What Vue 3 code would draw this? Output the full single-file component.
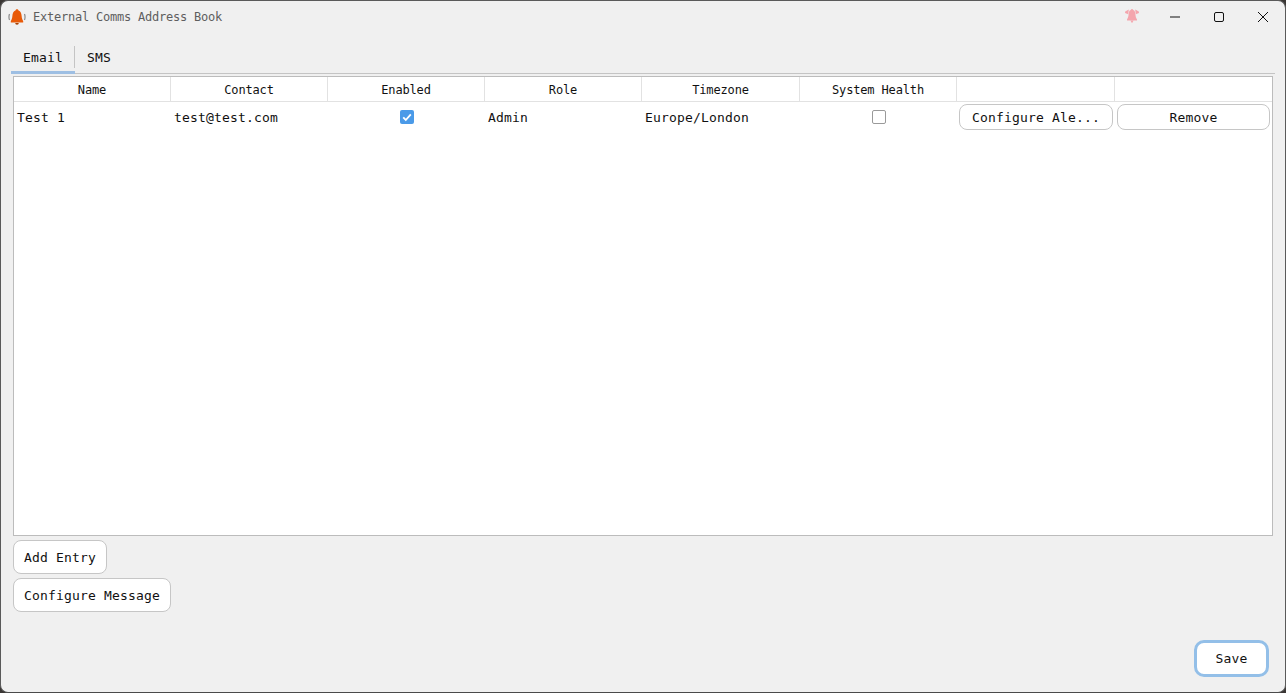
<template>
  <div class="window">
    <div class="titlebar">
      <svg class="app-icon" viewBox="0 0 18 18">
        <path d="M1.5 6 Q0.4 9 1.5 12 M16.5 6 Q17.6 9 16.5 12" fill="none" stroke="#8a8a8a" stroke-width="1.2" />
        <path d="M9 1.2c-.9 0-1.5.6-1.5 1.3C5.3 3.2 4.6 5.2 4.4 7.8c-.2 2.4-.7 3.8-1.6 5.2v1.4h12.4V13c-.9-1.4-1.4-2.8-1.6-5.2-.2-2.6-.9-4.6-3.1-5.3 0-.7-.6-1.3-1.5-1.3z" fill="#e85a08" />
        <path d="M7.2 15h3.6a1.8 1.8 0 0 1-3.6 0z" fill="#a84000" />
      </svg>
      <span class="title">External Comms Address Book</span>
      <div class="controls">
        <svg class="alert-icon" viewBox="0 0 16 16">
          <path d="M8 1c-.7 0-1.1.4-1.2 1C5.2 2.5 4.8 4 4.6 6.2 4.4 8.4 4 10 3 11.4v1.2h10v-1.2c-1-1.4-1.4-3-1.6-5.2C11.2 4 10.8 2.5 9.2 2 9.1 1.4 8.7 1 8 1z" fill="#f4a6ad" />
          <path d="M1.2 3.4 4.8 1.6 4.2 6.2 1 5zM14.8 3.4 11.2 1.6 11.8 6.2 15 5z" fill="#f4a6ad" />
          <path d="M6.4 12.6h3.2L8 15.2z" fill="#f4a6ad" />
        </svg>
        <button class="ctl">
          <svg viewBox="0 0 12 12"><path d="M1 6h10" stroke="#111" stroke-width="1" fill="none" /></svg>
        </button>
        <button class="ctl">
          <svg viewBox="0 0 12 12"><rect x="1.5" y="1.5" width="9" height="9" rx="1.5" stroke="#111" stroke-width="1" fill="none" /></svg>
        </button>
        <button class="ctl">
          <svg viewBox="0 0 12 12"><path d="M1 1l10 10M11 1L1 11" stroke="#111" stroke-width="1" fill="none" /></svg>
        </button>
      </div>
    </div>

    <div class="tabs">
      <div class="tab active">Email</div>
      <div class="tab">SMS</div>
    </div>

    <div class="table">
      <div class="thead">
        <div v-for="(h, i) in headers" :key="i" class="th">{{ h }}</div>
      </div>
      <div class="row">
        <div class="td">Test 1</div>
        <div class="td">test@test.com</div>
        <div class="td center"><span class="check on">
          <svg viewBox="0 0 14 14"><path d="M3.2 7.4l2.6 2.6 5-5.6" fill="none" stroke="#fff" stroke-width="1.8" /></svg>
        </span></div>
        <div class="td">Admin</div>
        <div class="td">Europe/London</div>
        <div class="td center"><span class="check"></span></div>
        <div class="td btn-cell"><button class="btn small">Configure Ale...</button></div>
        <div class="td btn-cell"><button class="btn small">Remove</button></div>
      </div>
    </div>

    <div class="actions">
      <button class="btn big">Add Entry</button>
      <button class="btn big">Configure Message</button>
    </div>

    <div class="footer">
      <button class="btn save">Save</button>
    </div>
  </div>
</template>

<script setup>
const headers = ['Name', 'Contact', 'Enabled', 'Role', 'Timezone', 'System Health', '', '']
</script>

<style>
html, body {
  margin: 0;
  height: 100%;
  background: #3a3634;
  overflow: hidden;
}
</style>

<style scoped>
.window {
  box-sizing: border-box;
  width: 1286px;
  height: 693px;
  display: flex;
  flex-direction: column;
  background: #f0f0f0;
  border: 1px solid #5a5a5a;
  border-bottom-color: #4a4a4a;
  border-radius: 8px;
  font-family: "DejaVu Sans Mono", "Liberation Mono", monospace;
  color: #111;
  overflow: hidden;
}

.titlebar {
  display: flex;
  align-items: center;
  height: 31px;
  flex: none;
  padding-left: 7px;
}
.app-icon {
  width: 18px;
  height: 18px;
  margin-right: 7px;
}
.title {
  font-size: 12px;
  letter-spacing: -0.22px;
  color: #5e5e5e;
}
.controls {
  margin-left: auto;
  display: flex;
  align-items: center;
}
.alert-icon {
  width: 16px;
  height: 16px;
  margin-right: 13px;
  margin-bottom: 2px;
}
.ctl {
  width: 44px;
  height: 30px;
  padding: 0;
  border: none;
  background: transparent;
  display: flex;
  align-items: center;
  justify-content: center;
}
.ctl svg {
  width: 12px;
  height: 12px;
}

.tabs {
  display: flex;
  flex: none;
  height: 28px;
  margin: 13px 10px 0;
  border-bottom: 1px solid #c4c4c4;
  align-items: stretch;
}
.tab {
  position: relative;
  box-sizing: border-box;
  width: 64px;
  padding-left: 12px;
  padding-top: 5px;
  font-size: 13px;
  letter-spacing: 0.17px;
}
.tab.active {
  border-bottom: 3px solid #9ebfe3;
  margin-bottom: -1px;
}
.tab.active::after {
  content: "";
  position: absolute;
  right: 0;
  top: 1px;
  height: 22px;
  width: 1px;
  background: #c4c4c4;
}

.table {
  flex: none;
  height: 460px;
  box-sizing: border-box;
  margin: 2px 12px 0;
  background: #fff;
  border: 1px solid #bcbcbc;
}
.thead,
.row {
  display: grid;
  grid-template-columns: 157px 157px 157px 157px 158px 157px 158px 1fr;
}
.thead {
  height: 24px;
  border-bottom: 1px solid #e2e2e2;
}
.th {
  box-sizing: border-box;
  border-right: 1px solid #e2e2e2;
  font-size: 12px;
  letter-spacing: -0.15px;
  padding-top: 2px;
  line-height: 22px;
  text-align: center;
}
.th:last-child {
  border-right: none;
}
.row {
  height: 30px;
}
.td {
  display: flex;
  align-items: center;
  box-sizing: border-box;
  padding-left: 3px;
  font-size: 13px;
  letter-spacing: 0.17px;
}
.center {
  justify-content: center;
  padding-left: 0;
}
.btn-cell {
  padding: 2px;
}
.check {
  box-sizing: border-box;
  width: 14px;
  height: 14px;
  border: 1px solid #9a9a9a;
  border-radius: 2px;
  background: #fff;
  display: block;
}
.check.on {
  border: none;
  background: #4a9ae8;
}
.check svg {
  display: block;
  width: 14px;
  height: 14px;
}

.btn {
  box-sizing: border-box;
  font-family: inherit;
  font-size: 13px;
  letter-spacing: 0.17px;
  color: #111;
  background: #fff;
  border: 1px solid #c6c6c6;
  border-radius: 8px;
  padding: 0;
}
.small {
  width: 100%;
  height: 26px;
}
.actions {
  display: flex;
  flex-direction: column;
  align-items: flex-start;
  gap: 4px;
  margin: 4px 12px 0;
  flex: none;
}
.big {
  height: 34px;
  padding: 0 10px;
}
.footer {
  margin-top: auto;
  display: flex;
  justify-content: flex-end;
  padding: 0 16px 15px 0;
}
.save {
  width: 75px;
  height: 37px;
  border: 3px solid #93bfe8;
  border-radius: 10px;
}
</style>
